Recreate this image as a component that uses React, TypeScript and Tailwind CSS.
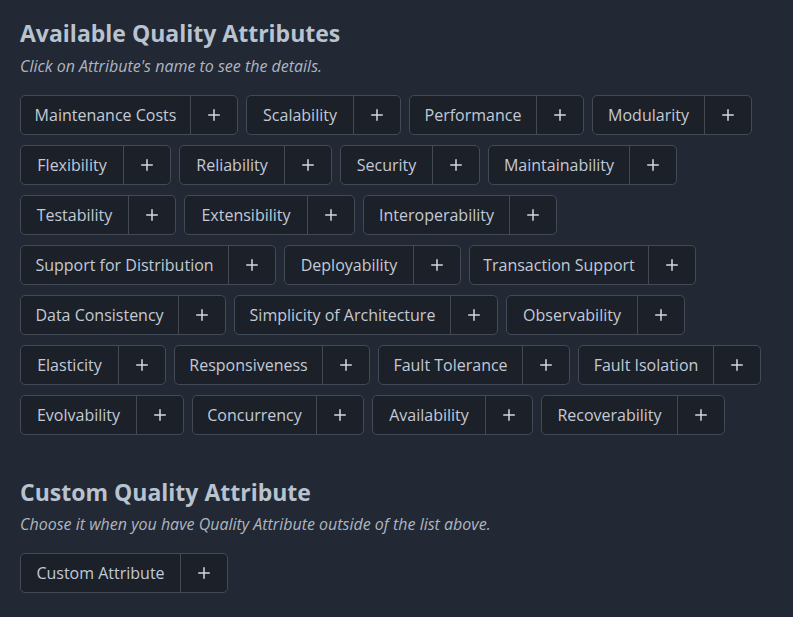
import React from 'react';
import { Plus } from 'lucide-react';

type Attr = { name: string; w: string };

const available: Attr[] = [
  { name: 'Maintenance Costs', w: 'w-[170px]' },
  { name: 'Scalability', w: 'w-[107px]' },
  { name: 'Performance', w: 'w-[127px]' },
  { name: 'Modularity', w: 'w-[112px]' },
  { name: 'Flexibility', w: 'w-[103px]' },
  { name: 'Reliability', w: 'w-[105px]' },
  { name: 'Security', w: 'w-[92px]' },
  { name: 'Maintainability', w: 'w-[141px]' },
  { name: 'Testability', w: 'w-[108px]' },
  { name: 'Extensibility', w: 'w-[123px]' },
  { name: 'Interoperability', w: 'w-[146px]' },
  { name: 'Support for Distribution', w: 'w-[208px]' },
  { name: 'Deployability', w: 'w-[129px]' },
  { name: 'Transaction Support', w: 'w-[179px]' },
  { name: 'Data Consistency', w: 'w-[158px]' },
  { name: 'Simplicity of Architecture', w: 'w-[216px]' },
  { name: 'Observability', w: 'w-[131px]' },
  { name: 'Elasticity', w: 'w-[98px]' },
  { name: 'Responsiveness', w: 'w-[148px]' },
  { name: 'Fault Tolerance', w: 'w-[144px]' },
  { name: 'Fault Isolation', w: 'w-[135px]' },
  { name: 'Evolvability', w: 'w-[116px]' },
  { name: 'Concurrency', w: 'w-[124px]' },
  { name: 'Availability', w: 'w-[113px]' },
  { name: 'Recoverability', w: 'w-[136px]' },
];

function AttributeButton({ name, w }: Attr) {
  return (
    <div className="flex h-10 rounded-[5px] border border-[#434a56] bg-[#1b2029]">
      <button
        className={`${w} flex items-center justify-center border-r border-[#434a56] text-[16px] text-[#c3cad5] whitespace-nowrap`}
      >
        {name}
      </button>
      <button className="flex w-[46px] items-center justify-center text-[#d3d8e0]">
        <Plus className="h-[18px] w-[18px]" strokeWidth={2} />
      </button>
    </div>
  );
}

export default function App() {
  return (
    <div
      className="min-h-screen bg-[#222834] px-5 pt-[18px]"
      style={{ fontFamily: '"Open Sans", "Noto Sans", sans-serif' }}
    >
      <h2 className="text-[23px] leading-[30px] font-bold text-[#b9c3d0]">
        Available Quality Attributes
      </h2>
      <p className="mt-[7px] text-[16px] leading-[22px] italic text-[#aeb6c2]">
        Click on Attribute's name to see the details.
      </p>
      <div className="mt-[18px] flex flex-wrap gap-x-[8px] gap-y-[10px]">
        {available.map((a) => (
          <AttributeButton key={a.name} {...a} />
        ))}
      </div>

      <h2 className="mt-[42px] text-[23px] leading-[30px] font-bold text-[#b9c3d0]">
        Custom Quality Attribute
      </h2>
      <p className="mt-[6px] text-[16px] leading-[22px] italic text-[#aeb6c2]">
        Choose it when you have Quality Attribute outside of the list above.
      </p>
      <div className="mt-[18px] flex">
        <AttributeButton name="Custom Attribute" w="w-[160px]" />
      </div>
    </div>
  );
}
